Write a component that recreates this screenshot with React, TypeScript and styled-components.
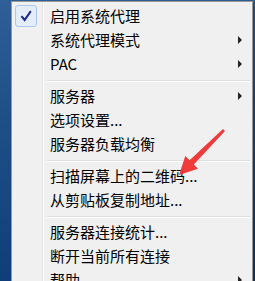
import React from 'react';
import styled, { createGlobalStyle } from 'styled-components';

const GlobalStyle = createGlobalStyle`
  html, body {
    margin: 0;
    padding: 0;
    width: 255px;
    height: 281px;
    overflow: hidden;
  }
  body {
    background: linear-gradient(180deg, #2f5f96 0%, #1d4e86 45%, #0e3f78 100%);
    font-family: "Noto Sans CJK SC", "Noto Sans", sans-serif;
  }
`;

const Desktop = styled.div`
  position: relative;
  width: 255px;
  height: 281px;
  padding: 1px 0 0 11px;
  box-sizing: border-box;
`;

const Menu = styled.div`
  position: relative;
  width: 242px;
  box-sizing: border-box;
  background: #f0f0f0;
  border: 1px solid #979797;
  padding: 2px 2px 2px 2px;
  display: flex;
  flex-direction: column;
  box-shadow: 2px 2px 3px rgba(0, 0, 0, 0.3);

  &::before {
    content: '';
    position: absolute;
    top: 0;
    bottom: 0;
    left: 30px;
    width: 1px;
    background: #e2e3e3;
    box-shadow: 1px 0 0 #ffffff;
  }
`;

const Item = styled.div`
  display: flex;
  align-items: center;
  height: 24px;
  position: relative;
`;

const Gutter = styled.div`
  width: 35px;
  flex: none;
  display: flex;
  align-items: center;
  padding-left: 1px;
`;

const CheckBox = styled.div`
  width: 22px;
  height: 22px;
  box-sizing: border-box;
  border: 1px solid #aac8ef;
  border-radius: 3px;
  background: #e4edfa;
  display: flex;
  align-items: center;
  justify-content: center;
`;

const Label = styled.span`
  flex: 1;
  font-size: 15px;
  line-height: 24px;
  color: #000;
  white-space: nowrap;
`;

const SubArrow = styled.span`
  width: 0;
  height: 0;
  border-top: 4px solid transparent;
  border-bottom: 4px solid transparent;
  border-left: 4px solid #222;
  margin-right: 8px;
`;

const Separator = styled.div`
  height: 8px;
  display: flex;
  align-items: center;
  padding-left: 33px;

  &::after {
    content: '';
    flex: 1;
    height: 1px;
    background: #e0e0e0;
    box-shadow: 0 1px 0 #ffffff;
  }
`;

const Pointer = styled.svg`
  position: absolute;
  left: 0;
  top: 0;
  pointer-events: none;
`;

type Entry =
  | { kind: 'sep' }
  | { kind: 'item'; label: string; checked?: boolean; sub?: boolean };

const entries: Entry[] = [
  { kind: 'item', label: '启用系统代理', checked: true },
  { kind: 'item', label: '系统代理模式', sub: true },
  { kind: 'item', label: 'PAC', sub: true },
  { kind: 'sep' },
  { kind: 'item', label: '服务器', sub: true },
  { kind: 'item', label: '选项设置...' },
  { kind: 'item', label: '服务器负载均衡' },
  { kind: 'sep' },
  { kind: 'item', label: '扫描屏幕上的二维码...' },
  { kind: 'item', label: '从剪贴板复制地址...' },
  { kind: 'sep' },
  { kind: 'item', label: '服务器连接统计...' },
  { kind: 'item', label: '断开当前所有连接' },
  { kind: 'item', label: '帮助', sub: true },
];

export default function App() {
  return (
    <>
      <GlobalStyle />
      <Desktop>
        <Menu>
          {entries.map((e, i) =>
            e.kind === 'sep' ? (
              <Separator key={i} />
            ) : (
              <Item key={i}>
                <Gutter>
                  {e.checked && (
                    <CheckBox>
                      <svg width="14" height="14" viewBox="0 0 14 14">
                        <path
                          d="M2.5 7.2 L5.6 11 L11.8 2.2"
                          fill="none"
                          stroke="#1c2a8c"
                          strokeWidth="2"
                          strokeLinejoin="miter"
                        />
                      </svg>
                    </CheckBox>
                  )}
                </Gutter>
                <Label>{e.label}</Label>
                {e.sub && <SubArrow />}
              </Item>
            )
          )}
        </Menu>
        <Pointer width="255" height="281" viewBox="0 0 255 281">
          <polygon
            points="223,129 225,131 193.8,164.4 198,168.7 179,175 185.3,155.9 189.6,160.2"
            fill="#ef3b3b"
          />
        </Pointer>
      </Desktop>
    </>
  );
}
